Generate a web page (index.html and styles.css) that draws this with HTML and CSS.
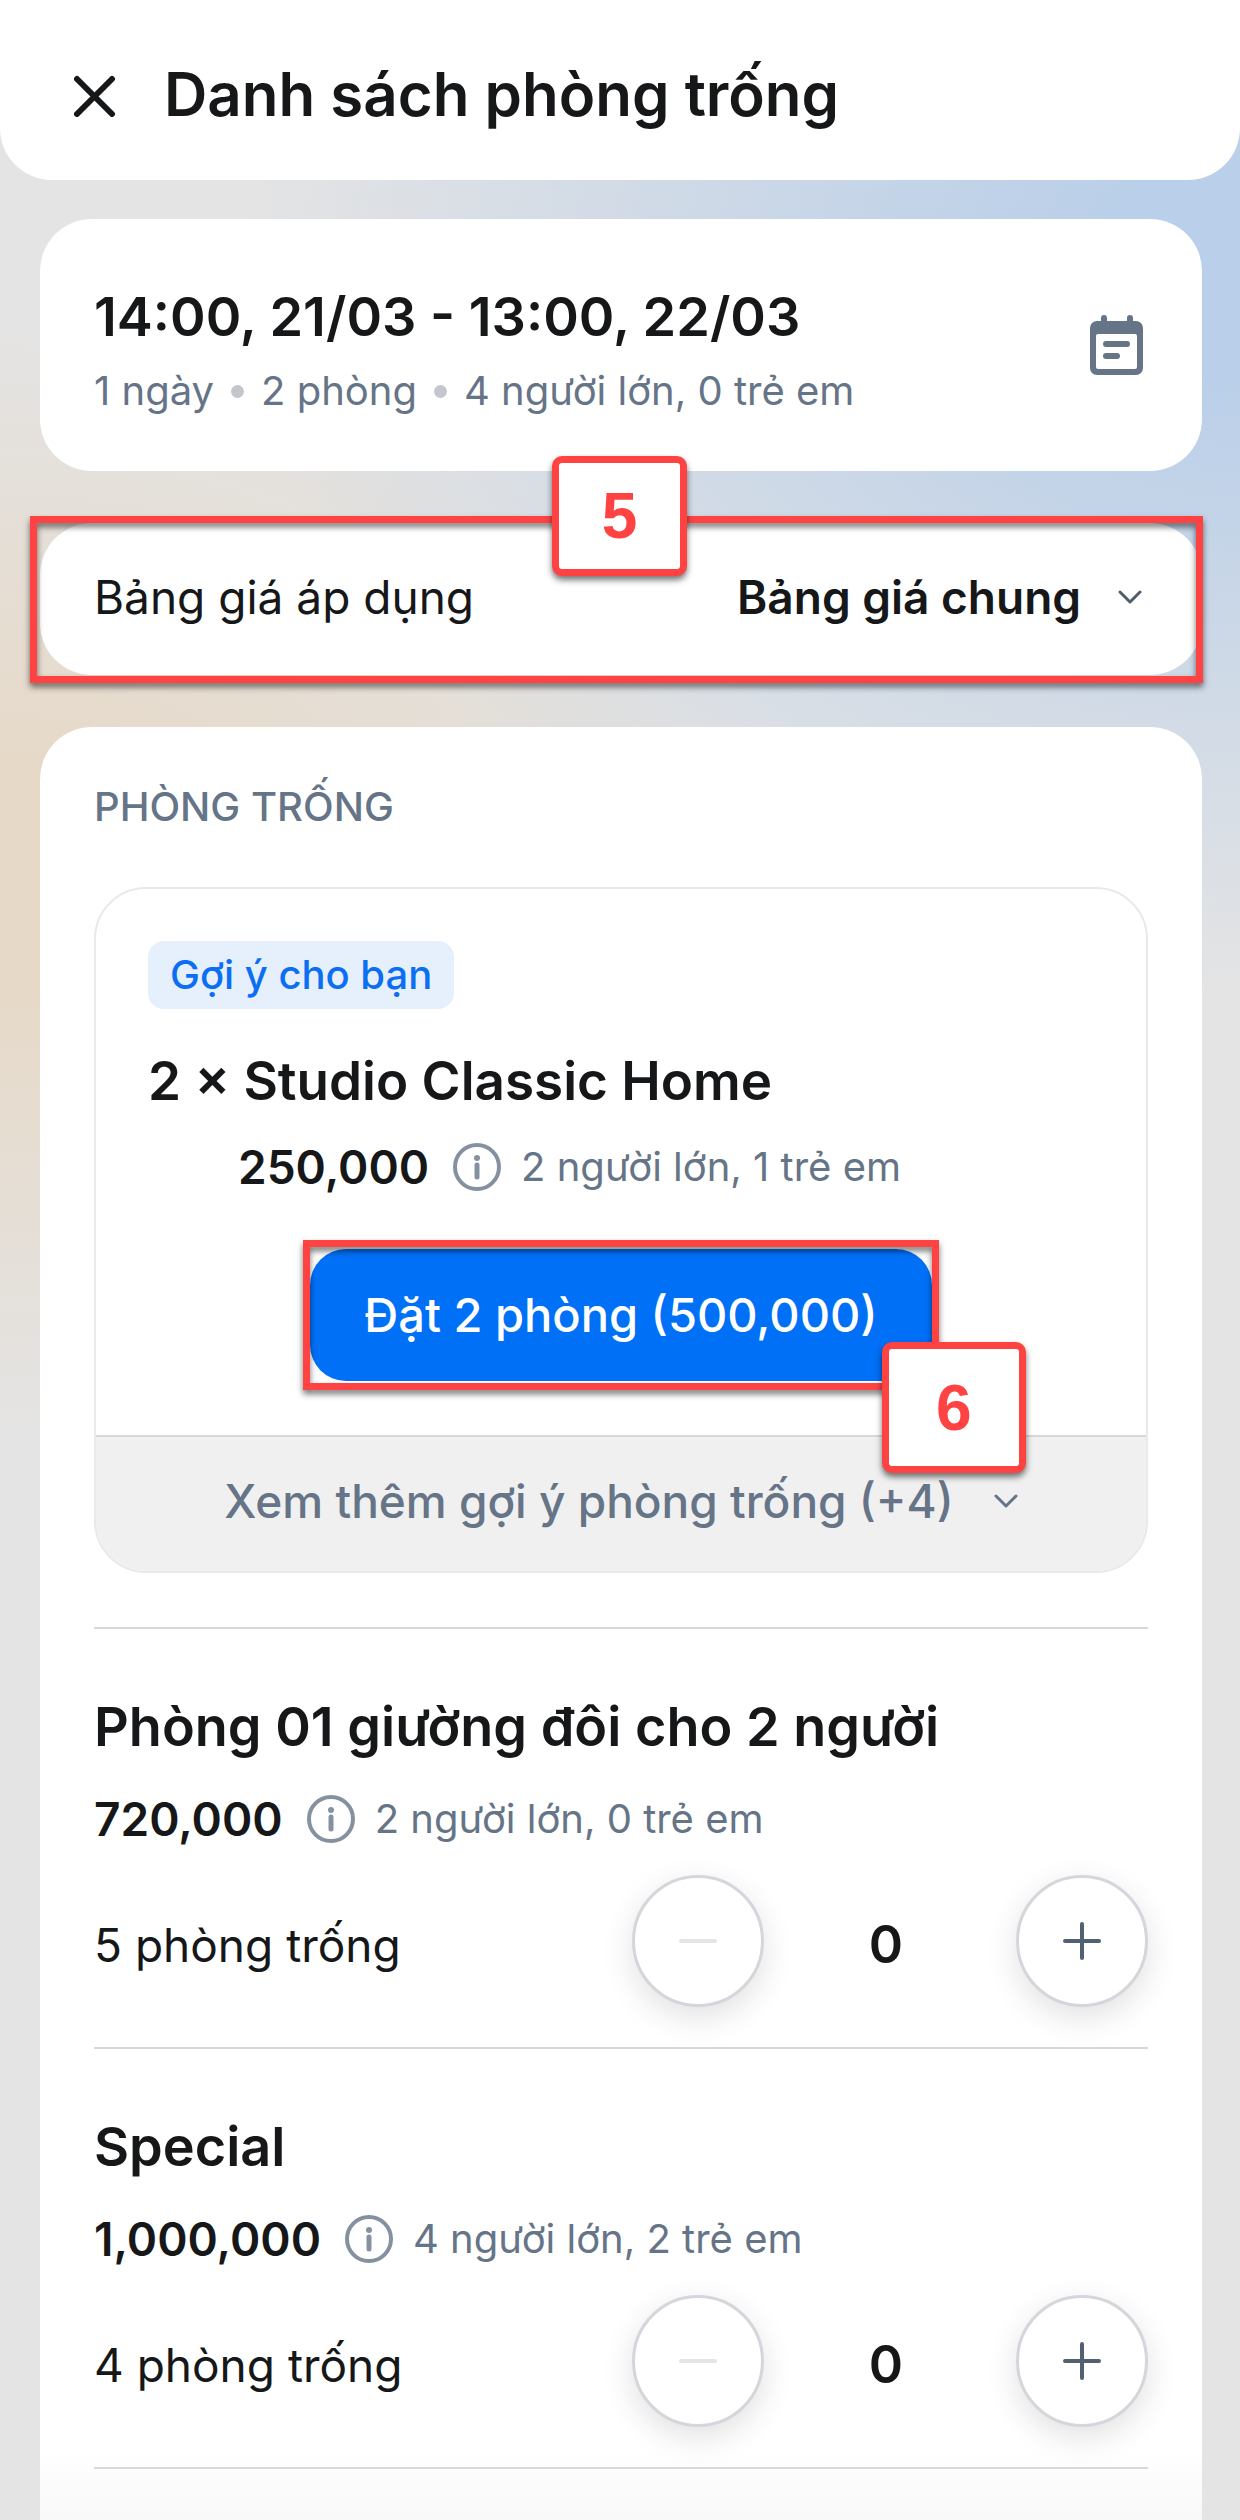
FILE: index.html
```html
<!DOCTYPE html>
<html lang="vi">
<head>
  <meta charset="utf-8">
  <meta name="viewport" content="width=device-width, initial-scale=1">
  <title>Danh sách phòng trống</title>
  <link rel="stylesheet" href="styles.css">
</head>
<body>
  <svg class="sprite" aria-hidden="true">
    <symbol id="chevron" viewBox="0 0 24 16"><path d="M2 3l10 10L22 3" fill="none" stroke="currentColor" stroke-width="3" stroke-linecap="round" stroke-linejoin="round"/></symbol>
    <symbol id="info" viewBox="0 0 48 48">
      <circle cx="24" cy="24" r="22" fill="none" stroke="currentColor" stroke-width="4"/>
      <circle cx="24" cy="15" r="3" fill="currentColor"/>
      <path d="M24 22v12" stroke="currentColor" stroke-width="5" stroke-linecap="round"/>
    </symbol>
    <symbol id="minus" viewBox="0 0 40 40"><path d="M3 20h34" stroke="currentColor" stroke-width="4" stroke-linecap="round"/></symbol>
    <symbol id="plus" viewBox="0 0 40 40"><path d="M3 20h34M20 3v34" stroke="currentColor" stroke-width="4" stroke-linecap="round"/></symbol>
  </svg>

  <header class="topbar">
    <button class="close" type="button" aria-label="Đóng">
      <svg viewBox="0 0 42 42"><path d="M3 4l35 35M38 4L3 39" stroke="currentColor" stroke-width="6" stroke-linecap="round"/></svg>
    </button>
    <h1 class="page-title">Danh sách phòng trống</h1>
  </header>

  <main class="content">
    <section class="card stay">
      <div class="stay-text">
        <h2 class="heading">14:00, 21/03 - 13:00, 22/03</h2>
        <p class="stay-meta">
          <span>1 ngày</span><i class="dot"></i><span>2 phòng</span><i class="dot"></i><span>4 người lớn, 0 trẻ em</span>
        </p>
      </div>
      <button class="calendar" type="button" aria-label="Đổi ngày">
        <svg viewBox="0 0 54 60">
          <path fill="currentColor" fill-rule="evenodd" d="M14 0a3 3 0 0 1 3 3v3h20V3a3 3 0 0 1 6 0v3h3a7 7 0 0 1 7 7v40a7 7 0 0 1-7 7H7a7 7 0 0 1-7-7V13a7 7 0 0 1 7-7h4V3a3 3 0 0 1 3-3zM8 19a2 2 0 0 0-2 2v31a2 2 0 0 0 2 2h37a2 2 0 0 0 2-2V21a2 2 0 0 0-2-2z"/>
          <path d="M16 29h21M16 41h11" stroke="currentColor" stroke-width="6" stroke-linecap="round"/>
        </svg>
      </button>
    </section>

    <section class="card pricing">
      <label class="body-text" for="price-list">Bảng giá áp dụng</label>
      <span class="picker">
        <select id="price-list" class="picker-select"><option>Bảng giá chung</option></select>
        <svg class="chevron"><use href="#chevron"/></svg>
      </span>
      <span class="frame frame-pricing"></span>
      <span class="marker marker-five">5</span>
    </section>

    <section class="card rooms">
      <h2 class="caption">PHÒNG TRỐNG</h2>

      <article class="offer">
        <div class="offer-body">
          <span class="tag">Gợi ý cho bạn</span>
          <h3 class="heading offer-title">2 × Studio Classic Home</h3>
          <p class="price-row offer-price">
            <strong class="price">250,000</strong>
            <svg class="info"><use href="#info"/></svg>
            <span class="guests">2 người lớn, 1 trẻ em</span>
          </p>
          <div class="book-wrap">
            <button class="book" type="button">Đặt 2 phòng (500,000)</button>
            <span class="frame frame-book"></span>
            <span class="marker marker-six">6</span>
          </div>
        </div>
        <button class="more" type="button">Xem thêm gợi ý phòng trống (+4)<svg class="chevron"><use href="#chevron"/></svg></button>
      </article>

      <article class="room">
        <h3 class="heading">Phòng 01 giường đôi cho 2 người</h3>
        <p class="price-row">
          <strong class="price">720,000</strong>
          <svg class="info"><use href="#info"/></svg>
          <span class="guests">2 người lớn, 0 trẻ em</span>
        </p>
        <div class="stock">
          <span class="body-text stock-label">5 phòng trống</span>
          <button class="step" type="button" aria-label="Bớt" disabled><svg><use href="#minus"/></svg></button>
          <output class="count">0</output>
          <button class="step" type="button" aria-label="Thêm"><svg><use href="#plus"/></svg></button>
        </div>
      </article>

      <article class="room">
        <h3 class="heading">Special</h3>
        <p class="price-row">
          <strong class="price">1,000,000</strong>
          <svg class="info"><use href="#info"/></svg>
          <span class="guests">4 người lớn, 2 trẻ em</span>
        </p>
        <div class="stock">
          <span class="body-text stock-label">4 phòng trống</span>
          <button class="step" type="button" aria-label="Bớt" disabled><svg><use href="#minus"/></svg></button>
          <output class="count">0</output>
          <button class="step" type="button" aria-label="Thêm"><svg><use href="#plus"/></svg></button>
        </div>
      </article>
      <div class="rooms-end"></div>
    </section>
  </main>
</body>
</html>
```
FILE: styles.css
```css
:root {
  --ink: #161719;
  --muted: #667487;
  --line: #d6d8da;
  --blue: #0070f7;
  --red: #ff4343;
}

* {
  box-sizing: border-box;
  margin: 0;
}

body {
  display: flex;
  flex-direction: column;
  min-height: 100vh;
  color: var(--ink);
  font-family: Inter, "Liberation Sans", sans-serif;
  background:
    radial-gradient(1000px 720px at 100% 270px, rgba(186, 207, 233, 1) 15%, rgba(186, 207, 233, 0) 100%),
    radial-gradient(800px 560px at 0 880px, rgba(230, 217, 200, 1) 20%, rgba(230, 217, 200, 0) 100%),
    #e4e4e4;
}

button,
select {
  padding: 0;
  border: 0;
  background: none;
  color: inherit;
  font: inherit;
}

.sprite {
  position: absolute;
  width: 0;
  height: 0;
}

.topbar {
  display: flex;
  align-items: center;
  gap: 48px;
  padding: 58px 74px 46px;
  border-radius: 0 0 52px 52px;
  background: #fff;
}

.close,
.close svg {
  display: block;
  width: 42px;
  height: 42px;
}

.page-title {
  padding-bottom: 4px;
  font-size: 60px;
  font-weight: 600;
  line-height: 72px;
}

.content {
  flex: 1;
  display: flex;
  flex-direction: column;
  gap: 52px;
  padding: 39px 38px 0 40px;
}

.card {
  border-radius: 52px;
  background: #fff;
}

.heading {
  font-size: 54px;
  font-weight: 600;
  line-height: 72px;
}

.body-text {
  font-size: 46px;
  line-height: 60px;
}

.stay {
  display: flex;
  align-items: center;
  justify-content: space-between;
  padding: 0 58px 0 54px;
}

.stay-text {
  display: flex;
  flex-direction: column;
  gap: 8px;
  padding: 62px 0 50px;
}

.stay-meta {
  display: flex;
  align-items: center;
  gap: 17px;
  color: var(--muted);
  font-size: 40px;
  line-height: 60px;
}

.dot {
  width: 13px;
  height: 13px;
  border-radius: 50%;
  background: #c3c7cc;
}

.calendar {
  color: var(--muted);
}

.calendar svg {
  display: block;
  width: 54px;
  height: 60px;
}

.pricing {
  position: relative;
  display: flex;
  align-items: center;
  justify-content: space-between;
  padding: 44px 60px 48px 54px;
}

.picker {
  display: flex;
  align-items: center;
  gap: 36px;
  color: #535d69;
}

.picker-select {
  appearance: none;
  height: 60px;
  color: var(--ink);
  font-size: 46px;
  font-weight: 600;
  line-height: 60px;
}

.chevron {
  width: 24px;
  height: 16px;
}

.frame {
  position: absolute;
  border: 7px solid var(--red);
  filter: drop-shadow(0 4px 3px rgba(0, 0, 0, 0.55));
  pointer-events: none;
}

.frame-pricing {
  inset: -7px -1px -8px -10px;
}

.frame-book {
  inset: -9px -7px;
}

.marker {
  position: absolute;
  display: flex;
  align-items: center;
  justify-content: center;
  border: 7px solid var(--red);
  border-radius: 10px;
  background: #fff;
  box-shadow: 0 4px 6px rgba(0, 0, 0, 0.55);
  color: var(--red);
  font: bold 64px/72px "Liberation Sans", Arial, sans-serif;
}

.marker-five {
  top: -67px;
  left: calc(50% - 69px);
  width: 135px;
  height: 120px;
}

.marker-six {
  right: -94px;
  bottom: -92px;
  width: 144px;
  height: 131px;
}

.rooms {
  flex: 1;
  display: flex;
  flex-direction: column;
  padding: 50px 54px 0;
  border-radius: 52px 52px 0 0;
  background: linear-gradient(to top, #f8f8f8, #fff 70px);
}

.caption {
  margin-bottom: 50px;
  color: var(--muted);
  font-size: 40px;
  font-weight: 500;
  line-height: 60px;
}

.offer {
  margin-bottom: 54px;
  border: 2px solid #e8e9ea;
  border-radius: 52px;
}

.offer-body {
  display: flex;
  flex-direction: column;
  align-items: flex-start;
  padding: 52px 52px 54px;
}

.offer-title {
  font-size: 53px;
}

.tag {
  margin-bottom: 36px;
  padding: 4px 22px;
  border-radius: 16px;
  background: #e5f0fc;
  color: #0b6ef3;
  font-size: 40px;
  font-weight: 500;
  line-height: 60px;
}

.price-row {
  display: flex;
  align-items: center;
  gap: 24px;
  line-height: 60px;
}

.offer-price {
  margin: 20px 0 52px 90px;
}

.price {
  font-size: 46px;
  font-weight: 600;
}

.info {
  width: 48px;
  height: 48px;
  color: #8591a0;
}

.guests {
  margin-left: -4px;
  color: var(--muted);
  font-size: 40px;
}

.book-wrap {
  position: relative;
  align-self: center;
}

.book {
  display: block;
  padding: 36px 54px;
  border-radius: 36px;
  background: var(--blue);
  color: #fff;
  font-size: 47px;
  font-weight: 500;
  line-height: 60px;
}

.more {
  display: flex;
  align-items: center;
  justify-content: center;
  gap: 40px;
  width: 100%;
  padding: 34px 0 40px;
  border-top: 2px solid var(--line);
  border-radius: 0 0 50px 50px;
  background: #f0f0f1;
  color: var(--muted);
  font-size: 46px;
  font-weight: 500;
  line-height: 60px;
}

.room {
  display: flex;
  flex-direction: column;
  gap: 26px;
  padding: 62px 0 40px;
  border-top: 2px solid var(--line);
}

.stock {
  display: flex;
  align-items: center;
}

.stock-label {
  flex: 1;
  padding-top: 8px;
}

.step {
  display: flex;
  align-items: center;
  justify-content: center;
  width: 132px;
  height: 132px;
  border: 3px solid #d5d5dc;
  border-radius: 50%;
  background: #fff;
  box-shadow: 0 10px 32px rgba(0, 0, 0, 0.12);
  color: #536072;
}

.step:disabled {
  color: #e5e5e7;
}

.step svg {
  width: 40px;
  height: 40px;
}

.count {
  width: 252px;
  padding: 8px 8px 0 0;
  font-size: 52px;
  font-weight: 600;
  line-height: 60px;
  text-align: center;
}

.rooms-end {
  flex: 1;
  min-height: 50px;
  border-top: 2px solid var(--line);
}
```
